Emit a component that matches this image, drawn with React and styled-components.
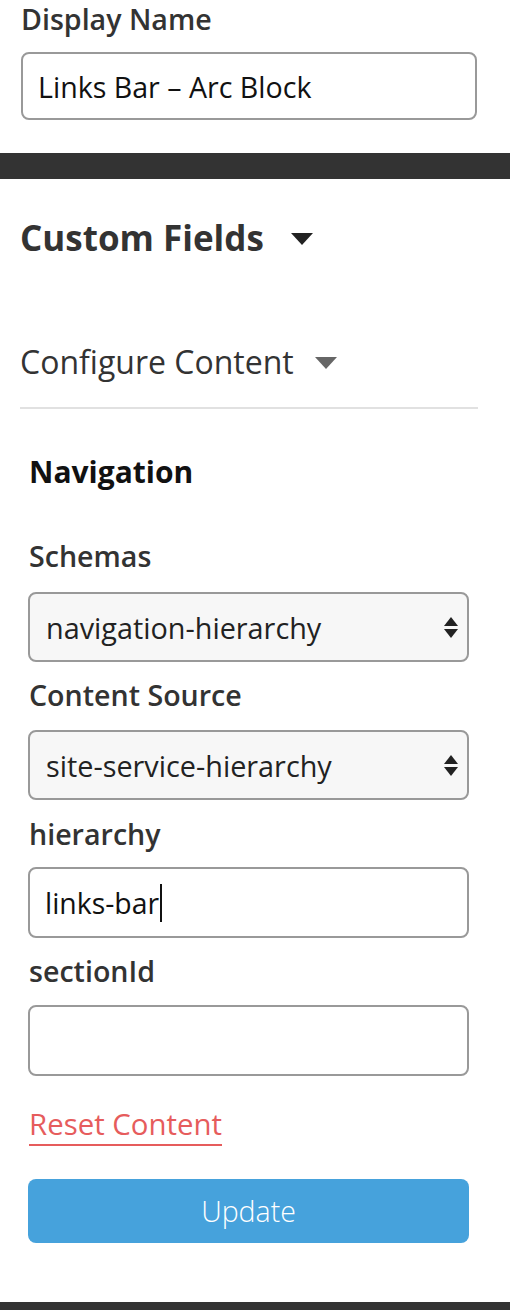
import React from 'react'
import styled, { createGlobalStyle } from 'styled-components'

const GlobalStyle = createGlobalStyle`
  html, body {
    margin: 0;
    padding: 0;
    background: #ffffff;
    font-family: "Open Sans", "Noto Sans", sans-serif;
    color: #333333;
  }
`

const Page = styled.div`
  width: 510px;
  height: 1310px;
  overflow: hidden;
  display: flex;
  flex-direction: column;
`

const TopSection = styled.div`
  padding: 0 33px 33px 21px;
`

const Label = styled.label`
  display: block;
  font-size: 28.6px;
  font-weight: 600;
  color: #333;
  line-height: 38px;
  margin: ${p => p.margin || '0'};
`

const TextInput = styled.div`
  box-sizing: border-box;
  height: ${p => p.h || 71}px;
  border: 2px solid #999;
  border-radius: 8px;
  background: #fff;
  display: flex;
  align-items: center;
  padding: 0 ${p => p.pad || 15}px;
  font-size: ${p => p.size || 28}px;
  color: #111;
`

const Caret = styled.span`
  display: inline-block;
  width: 2px;
  height: 38px;
  background: #111;
  margin-left: 1px;
`

const DarkBar = styled.div`
  height: ${p => p.h}px;
  background: #333333;
  flex-shrink: 0;
`

const Fields = styled.div`
  flex: 1;
  padding: 0 32px 0 20px;
`

const Toggle = styled.div`
  display: flex;
  align-items: center;
  gap: ${p => p.gap}px;
  font-size: ${p => p.size}px;
  font-weight: ${p => p.weight};
  line-height: ${p => p.lh}px;
  margin-top: ${p => p.top}px;
  color: #333;
`

const Triangle = styled.span`
  width: 0;
  height: 0;
  border-left: 11px solid transparent;
  border-right: 11px solid transparent;
  border-top: 12px solid ${p => p.color};
  margin-top: 2px;
`

const Divider = styled.div`
  height: 2px;
  background: #e1e1e1;
  margin-top: 23px;
`

const Panel = styled.div`
  padding: 0 9px 0 8px;
`

const Heading = styled.div`
  font-size: 30px;
  font-weight: 700;
  color: #111;
  line-height: 41px;
  margin: 42px 0 0 1px;
`

const SelectBox = styled.div`
  box-sizing: border-box;
  height: 70px;
  border: 2px solid #999;
  border-radius: 8px;
  background: #f7f7f7;
  display: flex;
  align-items: center;
  justify-content: space-between;
  padding: 0 9px 0 16px;
  font-size: 28.8px;
  color: #222;
`

const Arrows = styled.span`
  display: flex;
  flex-direction: column;
  gap: 3px;
`

const Arrow = styled.span`
  width: 0;
  height: 0;
  border-left: 7px solid transparent;
  border-right: 7px solid transparent;
  ${p => p.up ? 'border-bottom: 9px solid #222;' : 'border-top: 9px solid #222;'}
`

const ResetLink = styled.a`
  display: inline-block;
  font-size: 29.4px;
  color: #e65c5c;
  text-decoration: none;
  border-bottom: 2px solid #e65c5c;
  line-height: 40px;
  margin: 28px 0 0 1px;
`

const UpdateButton = styled.button`
  display: block;
  width: 100%;
  height: 64px;
  margin-top: 33px;
  border: none;
  border-radius: 8px;
  background: #46a2dc;
  color: #fff;
  font-family: inherit;
  font-size: 28.5px;
  font-weight: 300;
`

const Select = ({ value }) => (
  <SelectBox>
    <span>{value}</span>
    <Arrows>
      <Arrow up />
      <Arrow />
    </Arrows>
  </SelectBox>
)

export default function App() {
  return (
    <Page>
      <GlobalStyle />
      <TopSection>
        <Label margin="0 0 14px">Display Name</Label>
        <TextInput h={68} size={28.6} pad={15}>Links Bar – Arc Block</TextInput>
      </TopSection>
      <DarkBar h={26} />
      <Fields>
        <Toggle size={35} weight={700} lh={48} gap={27} top={35}>
          Custom Fields <Triangle color="#222" />
        </Toggle>
        <Toggle size={32} weight={400} lh={44} gap={21} top={78}>
          Configure Content <Triangle color="#666" />
        </Toggle>
        <Divider />
        <Panel>
          <Heading>Navigation</Heading>
          <Label margin="45px 0 17px 1px">Schemas</Label>
          <Select value="navigation-hierarchy" />
          <Label margin="14px 0 16px 1px">Content Source</Label>
          <Select value="site-service-hierarchy" />
          <Label margin="15px 0 14px 1px">hierarchy</Label>
          <TextInput size={28.4}>links-bar<Caret /></TextInput>
          <Label margin="14px 0 15px 1px">sectionId</Label>
          <TextInput />
          <ResetLink href="#">Reset Content</ResetLink>
          <UpdateButton>Update</UpdateButton>
        </Panel>
      </Fields>
      <DarkBar h={8} />
    </Page>
  )
}
